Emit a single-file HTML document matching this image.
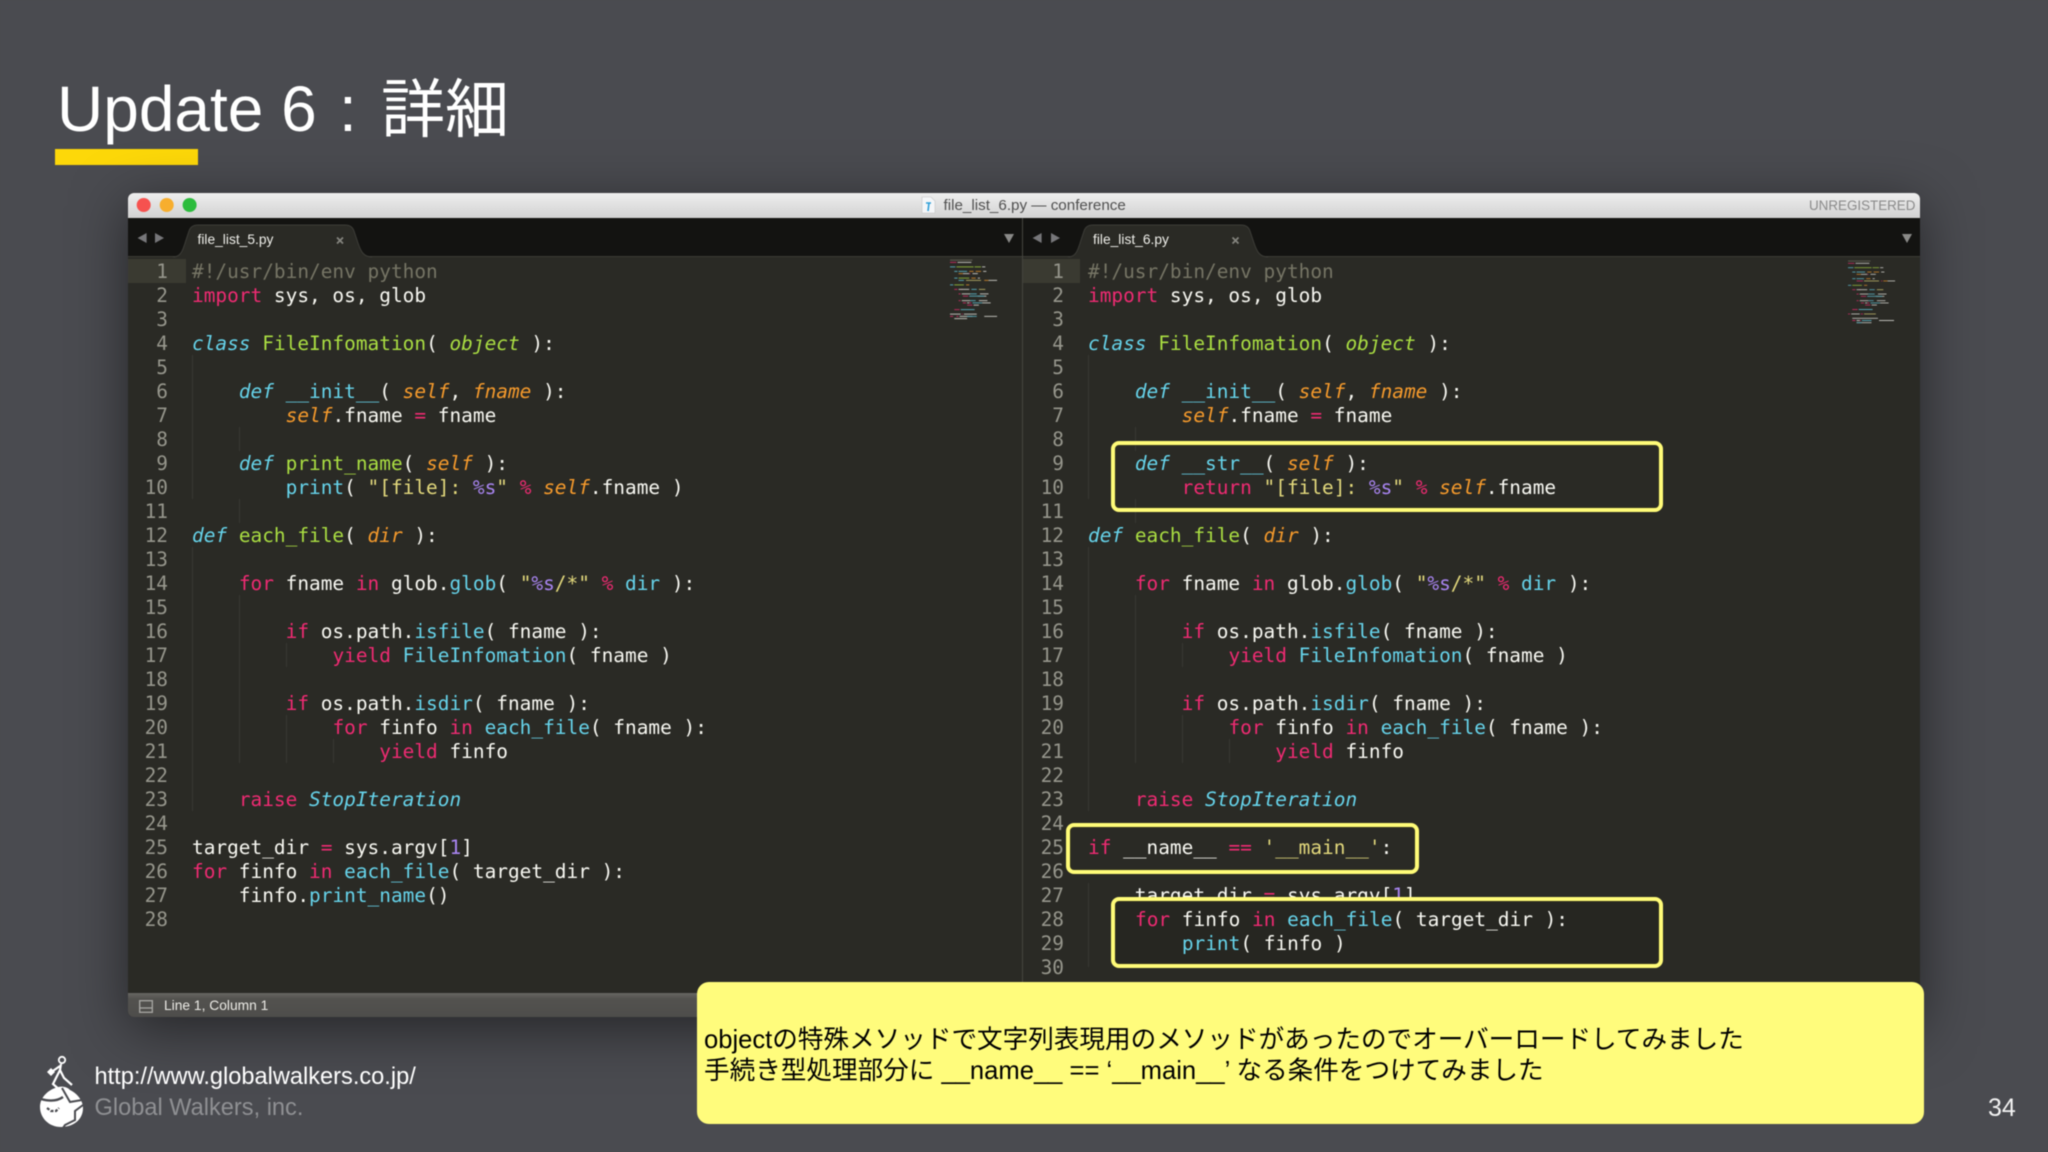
<!DOCTYPE html>
<html lang="ja"><head><meta charset="utf-8"><title>Update 6 : 詳細</title>
<style>
html,body{margin:0;padding:0;background:#4a4b50}
#r{position:relative;width:2048px;height:1152px;overflow:hidden;background:#4a4b50;font-family:"Liberation Sans","Noto Sans CJK JP",sans-serif;filter:blur(.45px)}
#r div,#r pre,#r svg{position:absolute;margin:0}
.t{white-space:nowrap;line-height:1}
pre{font-family:"DejaVu Sans Mono",monospace;font-size:19.45px;line-height:24px;color:#f8f8f2}
.n{color:#96968c;text-align:right;width:60px}
.k{color:#ee2a72}.b{color:#66d3ea}.i{font-style:italic}.g{color:#aade42}.o{color:#f59a2c;font-style:italic}.y{color:#e2d87c}.p{color:#a985f2}.c{color:#767565}
.box{border:4px solid #fffb78;border-radius:8px;box-sizing:border-box;box-shadow:0 0 0 1px rgba(60,60,20,.4) inset}
</style></head><body><div id="r">

<div class="t" style="left:57px;top:77px;font-size:64px;color:#fff">Update 6</div>
<div class="t" style="left:339px;top:77px;font-size:64px;color:#fff">:</div>
<div class="t" style="left:381px;top:78px;font-size:64px;color:#fff">詳細</div>
<div style="left:55px;top:149px;width:143px;height:16px;background:#fdd809"></div>

<!-- window -->
<div style="left:128px;top:193px;width:1792px;height:824px;border-radius:6px;background:#2a2a25;box-shadow:0 12px 55px rgba(0,0,0,.5)"></div>
<div style="left:128px;top:193px;width:1792px;height:25px;border-radius:6px 6px 0 0;background:linear-gradient(#eeeeee,#d2d2d2)"></div>
<div style="left:128px;top:218px;width:1792px;height:39px;background:#131311;border-bottom:1px solid #3b3b36;box-sizing:border-box"></div>
<div style="left:128px;top:993px;width:1792px;height:24px;border-radius:0 0 6px 6px;background:linear-gradient(#686763,#53524f 25%,#4e4d4b)"></div>
<div style="left:1022px;top:218px;width:1px;height:765px;background:#45453f"></div>
<div style="left:128px;top:259px;width:58px;height:24px;background:#3a3a31"></div>
<div style="left:1023px;top:259px;width:57px;height:24px;background:#3a3a31"></div>

<svg style="left:0;top:0" width="2048" height="1152" viewBox="0 0 2048 1152">
  <circle cx="143.7" cy="205" r="7" fill="#f6524f"/><circle cx="166.7" cy="205" r="7" fill="#f7ae2e"/><circle cx="189.6" cy="205" r="7" fill="#2cbc3d"/>
  <path d="M922 197h9l4 4v12h-13z" fill="#f4f6f8" stroke="#c4c4c4" stroke-width=".6"/><path d="M926 203h5M929 203l-1 8" stroke="#2f9fd8" stroke-width="1.6" fill="none"/>
  <g id="tabs" fill="#2a2a25" stroke="#3d3d38">
    <path d="M173 257C181 257 183 250 186 240L189 231Q191 225 198 225H345Q352 225 354 231L358 243C361 252 364 257 372 257"/>
    <path d="M1068 257C1076 257 1078 250 1081 240L1084 231Q1086 225 1093 225H1241Q1248 225 1250 231L1254 243C1257 252 1260 257 1268 257"/>
  </g>
  <g fill="#77777a">
    <path d="M137.6 238l9-5v10zM164 238l-9-5v10zM1032.6 238l9-5v10zM1060 238l-9-5v10z"/>
    <path d="M1004 234h10l-5 9zM1902 234h10l-5 9z" fill="#8a8a88"/>
  </g>
  <g stroke="#85857f" stroke-width="1.7" fill="none"><path d="M337 237.500l6 6m0-6l-6 6M1232.500 237.500l6 6m0-6l-6 6"/></g>
  <g fill="none" stroke="#a8a8a4" stroke-width="1.300"><rect x="139.700" y="1000.700" width="12.600" height="11.600"/><path d="M140 1008h12"/></g>

  <!-- indent guides -->
  <g stroke="#383832" stroke-width="1" fill="none">
    <path d="M192.500 355v144M239.500 427v24M239.500 499v24M192.500 547v264M239.500 595v168M286.500 643v24M286.500 715v48M333.500 739v24"/>
    <path d="M1088.500 355v144M1135.500 427v24M1135.500 499v24M1088.500 547v264M1135.500 595v168M1182.500 643v24M1182.500 715v48M1229.500 739v24M1088.500 883v84M1135.500 931v24"/>
  </g>

  <!-- minimaps -->
  <defs><g id="mm" fill="none" stroke-width=".42">
    <path stroke="#767565" d="M0 .5h21"/>
    <path stroke="#ee2a72" d="M0 1.500h6M18 6.500h1M4 13.500h3M10 13.500h2M8 15.500h2M12 16.500h5M8 18.500h2M12 19.500h3M18 19.500h2M16 20.500h5M4 22.500h5"/>
    <path stroke="#f8f8f2" d="M7 1.500h13M30 3.500h3M31 5.500h3M12 6.500h6M21 6.500h5M8 13.500h5M13 13.500h5M11 15.500h8M28 15.500h8M26 16.500h8M11 18.500h8M27 18.500h8M16 19.500h2M30 19.500h8M22 20.500h5M0 11.500h0"/>
    <path stroke="#66d3ea" d="M0 3.500h5M4 5.500h3M8 5.500h8M0 11.500h3M20 13.500h5M19 15.500h6M18 16.500h14M19 18.500h5M21 19.500h9M10 22.500h13"/>
    <path stroke="#aade42" d="M6 3.500h16M23 3.500h6M4 11.500h9"/>
    <path stroke="#f59a2c" d="M18 5.500h4M24 5.500h5M8 6.500h4M15 11.500h3"/>
    <path stroke="#e2d87c" d="M27 13.500h6"/>
  </g></defs>
  <g transform="translate(950 259) scale(1.07 2.25)" opacity=".7"><use href="#mm"/>
    <g fill="none" stroke-width=".42"><path stroke="#66d3ea" d="M4 8.500h3M8 9.500h5"/><path stroke="#aade42" d="M8 8.500h10"/><path stroke="#f59a2c" d="M20 8.500h4M32 9.500h4"/><path stroke="#e2d87c" d="M15 9.500h14"/><path stroke="#f8f8f2" d="M26 8.500h2M36 9.500h8M0 24.500h10M13 24.500h12M4 26.500h12M9 25.500h12M32 25.500h12"/><path stroke="#ee2a72" d="M0 25.500h3M6 25.500h2M11 24.500h1"/><path stroke="#66d3ea" d="M16 25.500h9"/></g></g>
  <g transform="translate(1848 260) scale(1.07 2.2)" opacity=".7"><use href="#mm"/>
    <g fill="none" stroke-width=".42"><path stroke="#66d3ea" d="M4 8.500h3M8 8.500h7"/><path stroke="#ee2a72" d="M8 9.500h6M31 9.500h1M0 24.500h2M12 24.500h2M4 27.500h3M10 27.500h2"/><path stroke="#f59a2c" d="M17 8.500h4M33 9.500h4"/><path stroke="#e2d87c" d="M15 9.500h14M15 24.500h11"/><path stroke="#f8f8f2" d="M23 8.500h2M37 9.500h7M3 24.500h8M4 26.500h24M8 27.500h3M29 27.500h14M8 28.500h14"/><path stroke="#66d3ea" d="M13 27.500h9M8 28.500h5"/></g></g>

  <!-- logo -->
  <g>
    <path d="M55 1088C60 1086 66 1086 70 1090C78 1094 83 1101 83 1108C83 1120 73 1127 61 1127C49 1127 40 1118 40 1107C40 1098 47 1091 55 1088Z" fill="#fff"/>
    <path d="M62 1088L70 1102L82 1100M83 1105L75 1111L75 1120L65 1125L63 1128" fill="none" stroke="#4a4b50" stroke-width="2"/>
    <path d="M41 1099C48 1101 56 1102 63 1097" fill="none" stroke="#4a4b50" stroke-width="2.400"/>
    <path d="M47 1108l4 3 5 0 3-3" fill="none" stroke="#4a4b50" stroke-width="2.200" stroke-dasharray="3 1.500"/>
    <circle cx="62" cy="1060" r="3.200" fill="none" stroke="#fff" stroke-width="1.800"/>
    <path d="M61 1064L60 1070L53 1084L62 1092M60 1070L64 1078L72 1085M60 1066L50 1073" fill="none" stroke="#fff" stroke-width="2.200"/>
    <path d="M47 1072l4-4 4 4-4 4z" fill="#fff"/>
  </g>
</svg>

<div class="t" style="left:943.500px;top:198px;font-size:15.200px;color:#505050">file_list_6.py — conference</div>
<div class="t" style="left:1809px;top:199px;font-size:13.400px;color:#8a8a8a">UNREGISTERED</div>
<div class="t" style="left:197.500px;top:233px;font-size:13.800px;color:#efefea">file_list_5.py</div>
<div class="t" style="left:1093px;top:233px;font-size:13.800px;color:#efefea">file_list_6.py</div>
<div class="t" style="left:164px;top:999px;font-size:13.800px;color:#ecebe6">Line 1, Column 1</div>

<!-- left pane -->
<pre class="n" style="left:108px;top:260px">1
2
3
4
5
6
7
8
9
10
11
12
13
14
15
16
17
18
19
20
21
22
23
24
25
26
27
28</pre>
<pre style="left:192px;top:260px"><span class="c">#!/usr/bin/env python</span>
<span class="k">import</span> sys, os, glob

<span class="b i">class</span> <span class="g">FileInfomation</span>( <span class="g i">object</span> ):

    <span class="b i">def</span> <span class="b">__init__</span>( <span class="o">self</span>, <span class="o">fname</span> ):
        <span class="o">self</span>.fname <span class="k">=</span> fname

    <span class="b i">def</span> <span class="g">print_name</span>( <span class="o">self</span> ):
        <span class="b">print</span>( <span class="y">"[file]: </span><span class="p">%s</span><span class="y">"</span> <span class="k">%</span> <span class="o">self</span>.fname )

<span class="b i">def</span> <span class="g">each_file</span>( <span class="o">dir</span> ):

    <span class="k">for</span> fname <span class="k">in</span> glob.<span class="b">glob</span>( <span class="y">"</span><span class="p">%s</span><span class="y">/*"</span> <span class="k">%</span> <span class="b">dir</span> ):

        <span class="k">if</span> os.path.<span class="b">isfile</span>( fname ):
            <span class="k">yield</span> <span class="b">FileInfomation</span>( fname )

        <span class="k">if</span> os.path.<span class="b">isdir</span>( fname ):
            <span class="k">for</span> finfo <span class="k">in</span> <span class="b">each_file</span>( fname ):
                <span class="k">yield</span> finfo

    <span class="k">raise</span> <span class="b i">StopIteration</span>

target_dir <span class="k">=</span> sys.argv[<span class="p">1</span>]
<span class="k">for</span> finfo <span class="k">in</span> <span class="b">each_file</span>( target_dir ):
    finfo.<span class="b">print_name</span>()
</pre>

<!-- right pane -->
<pre class="n" style="left:1004px;top:260px">1
2
3
4
5
6
7
8
9
10
11
12
13
14
15
16
17
18
19
20
21
22
23
24
25
26
27
28
29
30</pre>
<pre style="left:1088px;top:260px"><span class="c">#!/usr/bin/env python</span>
<span class="k">import</span> sys, os, glob

<span class="b i">class</span> <span class="g">FileInfomation</span>( <span class="g i">object</span> ):

    <span class="b i">def</span> <span class="b">__init__</span>( <span class="o">self</span>, <span class="o">fname</span> ):
        <span class="o">self</span>.fname <span class="k">=</span> fname

    <span class="b i">def</span> <span class="b">__str__</span>( <span class="o">self</span> ):
        <span class="k">return</span> <span class="y">"[file]: </span><span class="p">%s</span><span class="y">"</span> <span class="k">%</span> <span class="o">self</span>.fname

<span class="b i">def</span> <span class="g">each_file</span>( <span class="o">dir</span> ):

    <span class="k">for</span> fname <span class="k">in</span> glob.<span class="b">glob</span>( <span class="y">"</span><span class="p">%s</span><span class="y">/*"</span> <span class="k">%</span> <span class="b">dir</span> ):

        <span class="k">if</span> os.path.<span class="b">isfile</span>( fname ):
            <span class="k">yield</span> <span class="b">FileInfomation</span>( fname )

        <span class="k">if</span> os.path.<span class="b">isdir</span>( fname ):
            <span class="k">for</span> finfo <span class="k">in</span> <span class="b">each_file</span>( fname ):
                <span class="k">yield</span> finfo

    <span class="k">raise</span> <span class="b i">StopIteration</span>

<span class="k">if</span> __name__ <span class="k">==</span> <span class="y">'__main__'</span>:

    target_dir <span class="k">=</span> sys.argv[<span class="p">1</span>]</pre>

<div class="box" style="left:1111px;top:441px;width:552px;height:71px"></div>
<div class="box" style="left:1066px;top:823px;width:353px;height:51px"></div>
<div class="box" style="left:1111px;top:897px;width:552px;height:71px;background:#262621"></div>
<pre style="left:1135px;top:908px"><span class="k">for</span> finfo <span class="k">in</span> <span class="b">each_file</span>( target_dir ):
    <span class="b">print</span>( finfo )</pre>

<!-- note -->
<div style="left:697px;top:982px;width:1227px;height:142px;border-radius:12px;background:#fffc7c"></div>
<div class="t" style="left:704px;top:1028px;font-size:25.600px;color:#000">objectの特殊メソッドで文字列表現用のメソッドがあったのでオーバーロードしてみました</div>
<div class="t" style="left:704px;top:1059px;font-size:25.600px;color:#000">手続き型処理部分に __name__ == ‘__main__’ なる条件をつけてみました</div>

<!-- footer -->
<div class="t" style="left:94.500px;top:1066px;font-size:23.600px;color:#fff">http://www.globalwalkers.co.jp/</div>
<div class="t" style="left:94.500px;top:1097px;font-size:23.600px;color:#8f9093">Global Walkers, inc.</div>
<div class="t" style="left:1988px;top:1096px;font-size:25px;color:#f2f2f2">34</div>

</div></body></html>
